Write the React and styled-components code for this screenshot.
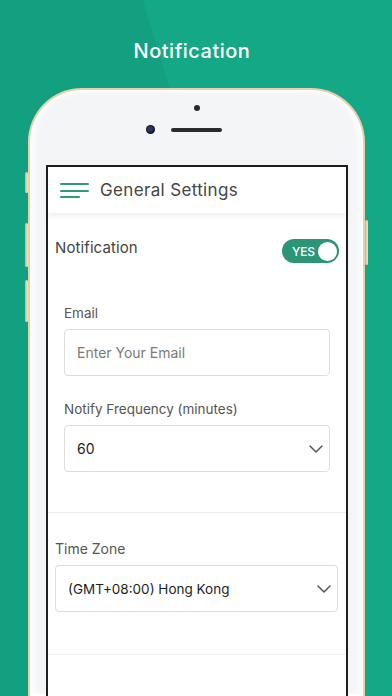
import React from "react";
import styled, { createGlobalStyle } from "styled-components";

const Global = createGlobalStyle`
  html, body { margin: 0; padding: 0; }
  body {
    width: 392px;
    height: 696px;
    overflow: hidden;
    font-family: "Inter", "Open Sans", sans-serif;
  }
  #root { height: 100%; }
`;

const Page = styled.div`
  width: 392px;
  height: 696px;
  overflow: hidden;
  background: linear-gradient(73deg, #12a081 0 58.8%, #14a886 58.8% 100%);
  display: flex;
  flex-direction: column;
  align-items: center;
`;

const Title = styled.h1`
  margin: 39px 8px 0 0;
  height: 24px;
  line-height: 24px;
  font-size: 20px;
  font-weight: 500;
  color: #ffffff;
  letter-spacing: 0.5px;
`;

const PhoneWrap = styled.div`
  position: relative;
  margin-top: 25px;
  margin-left: 1px;
  width: 337px;
  flex: 1;
`;

const SideButton = styled.span`
  position: absolute;
  ${(p) => (p.$side === "left" ? "left: -3px;" : "right: -3px;")}
  top: ${(p) => p.$top}px;
  width: 3px;
  height: ${(p) => p.$h}px;
  background: linear-gradient(90deg, #c9b48e, #f3e6cc);
  border-radius: 2px;
`;

const Phone = styled.div`
  box-sizing: border-box;
  width: 337px;
  height: 100%;
  border: 2px solid #e6d1ab;
  border-bottom: none;
  border-radius: 54px 54px 0 0;
  background: #f4f5f7;
  box-shadow: inset 0 0 0 1px #ffffff, inset 4px 0 6px rgba(255,255,255,0.9), inset -4px 0 6px rgba(255,255,255,0.9);
  display: flex;
  flex-direction: column;
  align-items: flex-start;
`;

const Bezel = styled.div`
  width: 100%;
  height: 75px;
  display: flex;
  flex-direction: column;
  align-items: center;
`;

const Sensor = styled.span`
  margin-top: 15px;
  width: 6px;
  height: 6px;
  border-radius: 50%;
  background: #2a2a2e;
`;

const EarRow = styled.div`
  margin-top: 14px;
  display: flex;
  align-items: center;
  gap: 16px;
  margin-left: -26px;
`;

const Camera = styled.span`
  width: 9px;
  height: 9px;
  border-radius: 50%;
  background: radial-gradient(circle at 45% 45%, #2b3566 0 30%, #121422 60%);
`;

const Speaker = styled.span`
  width: 51px;
  height: 4px;
  border-radius: 2px;
  background: #2b2b2f;
`;

const Screen = styled.div`
  box-sizing: border-box;
  margin-left: 16px;
  width: 302px;
  flex: 1;
  border: 2px solid #1f1f1f;
  border-bottom: none;
  background: #ffffff;
  display: flex;
  flex-direction: column;
`;

const Header = styled.div`
  height: 46px;
  display: flex;
  align-items: center;
  gap: 11px;
  padding-left: 12px;
  background: #ffffff;
  box-shadow: 0 3px 6px rgba(0, 0, 0, 0.07);
  position: relative;
  z-index: 1;
`;

const Burger = styled.div`
  display: flex;
  flex-direction: column;
  gap: 4.5px;
  margin-top: 1px;
`;

const BurgerLine = styled.span`
  display: block;
  width: ${(p) => p.$w}px;
  height: 2px;
  background: #2a9c7d;
  border-radius: 1px;
`;

const HeaderTitle = styled.div`
  font-size: 17px;
  color: #454545;
  font-weight: 400;
  letter-spacing: 0.35px;
`;

const Section = styled.div`
  display: flex;
  flex-direction: column;
  padding: ${(p) => p.$pad};
  border-bottom: ${(p) => (p.$divider ? "1px solid #eeeeee" : "none")};
`;

const ToggleRow = styled.div`
  display: flex;
  align-items: center;
  justify-content: space-between;
  padding: 0 7px 0 7px;
`;

const RowLabel = styled.div`
  font-size: 15px;
  color: #444444;
  margin-top: -8px;
  letter-spacing: 0.1px;
`;

const Toggle = styled.div`
  box-sizing: border-box;
  width: 57px;
  height: 24px;
  border-radius: 12px;
  background: #2b9576;
  display: flex;
  align-items: center;
  justify-content: space-between;
  padding: 0 2px 0 10px;
`;

const ToggleText = styled.span`
  font-size: 12px;
  font-weight: 500;
  color: #ffffff;
  letter-spacing: -0.2px;
`;

const Knob = styled.span`
  width: 19px;
  height: 19px;
  border-radius: 50%;
  background: #ffffff;
`;

const Group = styled.div`
  display: flex;
  flex-direction: column;
  padding: ${(p) => p.$pad};
`;

const FieldLabel = styled.label`
  font-size: ${(p) => p.$size || 13.5}px;
  color: #555555;
  line-height: 18px;
  margin-bottom: 7px;
`;

const Box = styled.div`
  box-sizing: border-box;
  height: 47px;
  border: 1px solid #dcdcdc;
  border-radius: 4px;
  display: flex;
  align-items: center;
  justify-content: space-between;
  padding: 0 6px 0 12px;
  margin-bottom: ${(p) => p.$mb || 0}px;
`;

const BoxText = styled.span`
  font-size: ${(p) => p.$size || 14}px;
  color: ${(p) => (p.$placeholder ? "#7a7a7a" : "#1e1e1e")};
`;

const Chevron = () => (
  <svg width="14" height="8" viewBox="0 0 14 8" fill="none" stroke="#555" strokeWidth="1.5" strokeLinecap="round" strokeLinejoin="round">
    <path d="M1 1 L7 7 L13 1" />
  </svg>
);

export default function App() {
  return (
    <>
      <Global />
      <Page>
        <Title>Notification</Title>
        <PhoneWrap>
          <SideButton $side="left" $top={84} $h={21} />
          <SideButton $side="left" $top={135} $h={44} />
          <SideButton $side="left" $top={192} $h={42} />
          <SideButton $side="right" $top={132} $h={45} />
          <Phone>
            <Bezel>
              <Sensor />
              <EarRow>
                <Camera />
                <Speaker />
              </EarRow>
            </Bezel>
            <Screen>
              <Header>
                <Burger>
                  <BurgerLine $w={29} />
                  <BurgerLine $w={29} />
                  <BurgerLine $w={20} />
                </Burger>
                <HeaderTitle>General Settings</HeaderTitle>
              </Header>
              <Section $pad="26px 0 40px" $divider>
                <ToggleRow>
                  <RowLabel>Notification</RowLabel>
                  <Toggle>
                    <ToggleText>YES</ToggleText>
                    <Knob />
                  </Toggle>
                </ToggleRow>
                <Group $pad="41px 16px 0">
                  <FieldLabel>Email</FieldLabel>
                  <Box $mb={24}>
                    <BoxText $placeholder>Enter Your Email</BoxText>
                  </Box>
                  <FieldLabel>Notify Frequency (minutes)</FieldLabel>
                  <Box>
                    <BoxText>60</BoxText>
                    <Chevron />
                  </Box>
                </Group>
              </Section>
              <Section $pad="27px 8px 42px 7px" $divider>
                <FieldLabel $size={14}>Time Zone</FieldLabel>
                <Box>
                  <BoxText $size={13.5}>(GMT+08:00) Hong Kong</BoxText>
                  <Chevron />
                </Box>
              </Section>
            </Screen>
          </Phone>
        </PhoneWrap>
      </Page>
    </>
  );
}
